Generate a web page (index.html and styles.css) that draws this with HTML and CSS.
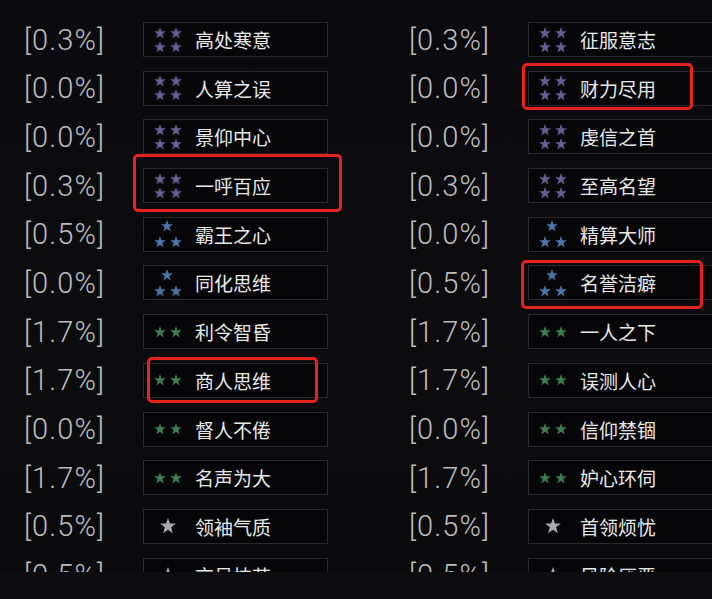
FILE: index.html
```html
<!DOCTYPE html>
<html lang="zh">
<head>
<meta charset="utf-8">
<link rel="stylesheet" href="styles.css">
</head>
<body>
<svg class="defs" width="0" height="0" aria-hidden="true">
  <defs>
    <symbol id="star" viewBox="0 0 10 10">
      <path d="M5 0 L6.2 3.45 L9.9 3.5 L6.95 5.75 L8.05 9.6 L5 7.35 L1.95 9.6 L3.05 5.75 L0.1 3.5 L3.8 3.45Z"/>
    </symbol>
  </defs>
</svg>
<div class="screen">
  <div class="list">
    <div class="grid">
      <div class="pct">[0.3%]</div><div class="card"><svg class="ic purple" viewBox="0 0 30 28"><use href="#star" x="0" y="1" width="12" height="12"/><use href="#star" x="16" y="1" width="12" height="12"/><use href="#star" x="0" y="15" width="12" height="12"/><use href="#star" x="16" y="15" width="12" height="12"/></svg><span class="name">高处寒意</span></div>
      <div class="pct r">[0.3%]</div><div class="card"><svg class="ic purple" viewBox="0 0 30 28"><use href="#star" x="0" y="1" width="12" height="12"/><use href="#star" x="16" y="1" width="12" height="12"/><use href="#star" x="0" y="15" width="12" height="12"/><use href="#star" x="16" y="15" width="12" height="12"/></svg><span class="name">征服意志</span></div>

      <div class="pct">[0.0%]</div><div class="card"><svg class="ic purple" viewBox="0 0 30 28"><use href="#star" x="0" y="1" width="12" height="12"/><use href="#star" x="16" y="1" width="12" height="12"/><use href="#star" x="0" y="15" width="12" height="12"/><use href="#star" x="16" y="15" width="12" height="12"/></svg><span class="name">人算之误</span></div>
      <div class="pct r">[0.0%]</div><div class="card"><svg class="ic purple" viewBox="0 0 30 28"><use href="#star" x="0" y="1" width="12" height="12"/><use href="#star" x="16" y="1" width="12" height="12"/><use href="#star" x="0" y="15" width="12" height="12"/><use href="#star" x="16" y="15" width="12" height="12"/></svg><span class="name">财力尽用</span></div>

      <div class="pct">[0.0%]</div><div class="card"><svg class="ic purple" viewBox="0 0 30 28"><use href="#star" x="0" y="1" width="12" height="12"/><use href="#star" x="16" y="1" width="12" height="12"/><use href="#star" x="0" y="15" width="12" height="12"/><use href="#star" x="16" y="15" width="12" height="12"/></svg><span class="name">景仰中心</span></div>
      <div class="pct r">[0.0%]</div><div class="card"><svg class="ic purple" viewBox="0 0 30 28"><use href="#star" x="0" y="1" width="12" height="12"/><use href="#star" x="16" y="1" width="12" height="12"/><use href="#star" x="0" y="15" width="12" height="12"/><use href="#star" x="16" y="15" width="12" height="12"/></svg><span class="name">虔信之首</span></div>

      <div class="pct">[0.3%]</div><div class="card"><svg class="ic purple" viewBox="0 0 30 28"><use href="#star" x="0" y="1" width="12" height="12"/><use href="#star" x="16" y="1" width="12" height="12"/><use href="#star" x="0" y="15" width="12" height="12"/><use href="#star" x="16" y="15" width="12" height="12"/></svg><span class="name">一呼百应</span></div>
      <div class="pct r">[0.3%]</div><div class="card"><svg class="ic purple" viewBox="0 0 30 28"><use href="#star" x="0" y="1" width="12" height="12"/><use href="#star" x="16" y="1" width="12" height="12"/><use href="#star" x="0" y="15" width="12" height="12"/><use href="#star" x="16" y="15" width="12" height="12"/></svg><span class="name">至高名望</span></div>

      <div class="pct">[0.5%]</div><div class="card"><svg class="ic blue" viewBox="0 0 30 28"><use href="#star" x="7" y="0" width="12" height="12"/><use href="#star" x="0" y="16" width="12" height="12"/><use href="#star" x="16" y="16" width="12" height="12"/></svg><span class="name">霸王之心</span></div>
      <div class="pct r">[0.0%]</div><div class="card"><svg class="ic blue" viewBox="0 0 30 28"><use href="#star" x="7" y="0" width="12" height="12"/><use href="#star" x="0" y="16" width="12" height="12"/><use href="#star" x="16" y="16" width="12" height="12"/></svg><span class="name">精算大师</span></div>

      <div class="pct">[0.0%]</div><div class="card"><svg class="ic blue" viewBox="0 0 30 28"><use href="#star" x="7" y="0" width="12" height="12"/><use href="#star" x="0" y="16" width="12" height="12"/><use href="#star" x="16" y="16" width="12" height="12"/></svg><span class="name">同化思维</span></div>
      <div class="pct r">[0.5%]</div><div class="card"><svg class="ic blue" viewBox="0 0 30 28"><use href="#star" x="7" y="0" width="12" height="12"/><use href="#star" x="0" y="16" width="12" height="12"/><use href="#star" x="16" y="16" width="12" height="12"/></svg><span class="name">名誉洁癖</span></div>

      <div class="pct">[1.7%]</div><div class="card"><svg class="ic green" viewBox="0 0 30 28"><use href="#star" x="0" y="8" width="12" height="12"/><use href="#star" x="16" y="8" width="12" height="12"/></svg><span class="name">利令智昏</span></div>
      <div class="pct r">[1.7%]</div><div class="card"><svg class="ic green" viewBox="0 0 30 28"><use href="#star" x="0" y="8" width="12" height="12"/><use href="#star" x="16" y="8" width="12" height="12"/></svg><span class="name">一人之下</span></div>

      <div class="pct">[1.7%]</div><div class="card"><svg class="ic green" viewBox="0 0 30 28"><use href="#star" x="0" y="8" width="12" height="12"/><use href="#star" x="16" y="8" width="12" height="12"/></svg><span class="name">商人思维</span></div>
      <div class="pct r">[1.7%]</div><div class="card"><svg class="ic green" viewBox="0 0 30 28"><use href="#star" x="0" y="8" width="12" height="12"/><use href="#star" x="16" y="8" width="12" height="12"/></svg><span class="name">误测人心</span></div>

      <div class="pct">[0.0%]</div><div class="card"><svg class="ic green" viewBox="0 0 30 28"><use href="#star" x="0" y="8" width="12" height="12"/><use href="#star" x="16" y="8" width="12" height="12"/></svg><span class="name">督人不倦</span></div>
      <div class="pct r">[0.0%]</div><div class="card"><svg class="ic green" viewBox="0 0 30 28"><use href="#star" x="0" y="8" width="12" height="12"/><use href="#star" x="16" y="8" width="12" height="12"/></svg><span class="name">信仰禁锢</span></div>

      <div class="pct">[1.7%]</div><div class="card"><svg class="ic green" viewBox="0 0 30 28"><use href="#star" x="0" y="8" width="12" height="12"/><use href="#star" x="16" y="8" width="12" height="12"/></svg><span class="name">名声为大</span></div>
      <div class="pct r">[1.7%]</div><div class="card"><svg class="ic green" viewBox="0 0 30 28"><use href="#star" x="0" y="8" width="12" height="12"/><use href="#star" x="16" y="8" width="12" height="12"/></svg><span class="name">妒心环伺</span></div>

      <div class="pct">[0.5%]</div><div class="card"><svg class="ic grey" viewBox="0 0 30 28"><use href="#star" x="6" y="6" width="16" height="16"/></svg><span class="name">领袖气质</span></div>
      <div class="pct r">[0.5%]</div><div class="card"><svg class="ic grey" viewBox="0 0 30 28"><use href="#star" x="6" y="6" width="16" height="16"/></svg><span class="name">首领烦忧</span></div>

      <div class="pct">[0.5%]</div><div class="card"><svg class="ic grey" viewBox="0 0 30 28"><use href="#star" x="6" y="6" width="16" height="16"/></svg><span class="name">交易技艺</span></div>
      <div class="pct r">[0.5%]</div><div class="card"><svg class="ic grey" viewBox="0 0 30 28"><use href="#star" x="6" y="6" width="16" height="16"/></svg><span class="name">风险厌恶</span></div>
    </div>
  </div>
  <div class="mark m1"></div>
  <div class="mark m2"></div>
  <div class="mark m3"></div>
  <div class="mark m4"></div>
</div>
</body>
</html>
```
FILE: styles.css
```css
html, body {
  margin: 0;
  padding: 0;
  background: #0c0c0e;
}
.defs {
  position: absolute;
  width: 0;
  height: 0;
}
.screen {
  position: relative;
  width: 712px;
  height: 599px;
  overflow: hidden;
  background: #0d0d0f;
}
.list {
  height: 572px;
  overflow: hidden;
  background: linear-gradient(180deg, #0b0a0e 0%, #0c0c0f 60%, #0b0b0d 100%);
  padding-top: 22px;
  padding-left: 24px;
  box-sizing: border-box;
}
.grid {
  display: grid;
  grid-template-columns: 119px 185px 200px 185px;
  row-gap: 13.7px;
}
.pct {
  height: 35px;
  display: flex;
  align-items: center;
  font-family: "Roboto", "Liberation Sans", sans-serif;
  font-weight: 300;
  font-size: 29px;
  letter-spacing: 1.1px;
  color: #bcbcbe;
  white-space: nowrap;
}
.pct.r {
  padding-left: 81px;
}
.card {
  height: 35px;
  box-sizing: border-box;
  border: 1px solid #2b2b2f;
  background: #060608;
  display: flex;
  align-items: center;
  padding-left: 10px;
}
.ic {
  width: 30px;
  height: 28px;
  flex: none;
  margin-right: 11px;
}
.purple { fill: #6a5d94; }
.blue { fill: #4a77a8; }
.green { fill: #3e7d52; }
.grey { fill: #aaaaac; }
.name {
  font-family: "Noto Sans CJK SC", "Noto Sans", sans-serif;
  font-size: 19px;
  color: #e8e8e8;
  line-height: 1;
  white-space: nowrap;
}
.mark {
  position: absolute;
  border: 3px solid #e6221e;
  border-radius: 5px;
  box-sizing: border-box;
}
.m1 { left: 133px; top: 154px; width: 209px; height: 58px; }
.m2 { left: 147px; top: 357px; width: 171px; height: 46px; }
.m3 { left: 522px; top: 63px; width: 171px; height: 47px; }
.m4 { left: 521px; top: 260px; width: 182px; height: 49px; }
```
